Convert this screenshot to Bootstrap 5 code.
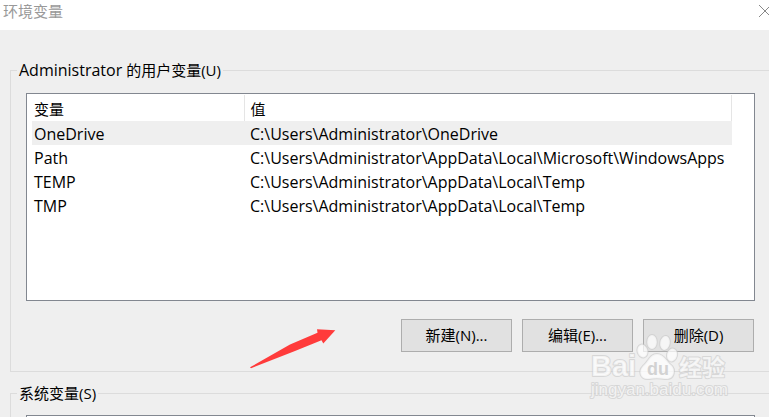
<!DOCTYPE html>
<html lang="zh-CN">
<head>
<meta charset="utf-8">
<meta name="viewport" content="width=device-width, initial-scale=1">
<title>环境变量</title>
<link href="https://cdn.jsdelivr.net/npm/bootstrap@5.3.0/dist/css/bootstrap.min.css" rel="stylesheet">
<style>
  body { font: 15px/24px "Open Sans", "Noto Sans CJK SC", sans-serif; color: #000; background: #efefef; }
  .title-bar { height: 30px; padding-left: 3px; }
  .title-bar h1 { font-size: 15px; line-height: 22px; color: #999; }
  .close-btn { width: 16px; height: 22px; color: #888; }
  .dialog-body { padding: 28px 0 0 10px; }
  .group-box { border: 1px solid #dcdcdc; border-right: 0; padding: 0 14px 19px 15px; margin-bottom: 9px; }
  .group-box legend { float: none; width: auto; margin: 0 0 0 -9px; padding: 0 2px; font-size: 15px; line-height: 24px; }
  .latin { font-size: 16px; }
  .var-list { border: 1px solid #828790; background: #fff; min-height: 208px; margin-top: 11px; padding: 1px 22px 0 5px; }
  .group-box + .group-box .var-list { margin-top: 10px; }
  .var-table { table-layout: fixed; line-height: 22px; font-size: 16px; }
  .var-table th, .var-table td { padding: 2px 0 0 6px; font-weight: 400; white-space: nowrap; }
  .var-table th { height: 26px; border-right: 1px solid #e5e5e5; font-size: 15px; }
  .var-table .name-col { width: 212px; }
  .var-table th:first-child, .var-table td:first-child { padding-left: 2px; }
  .var-table .selected { background: #efefef; }
  .actions { margin: 18px 1px 0 0; gap: 10px; }
  .dialog-btn { width: 111px; height: 33px; padding: 0 0 2px; border: 1px solid #adadad; border-radius: 0; background: #e1e1e1; color: #000; font-size: 15px; line-height: 24px; }
  .pointer-arrow { left: 250px; top: 327px; pointer-events: none; }
  .watermark { left: 584px; top: 328px; pointer-events: none; }
  .watermark text { font-family: "Liberation Sans", "Noto Sans CJK SC", sans-serif; font-weight: 700; }
  .watermark .site { font-weight: 400; }
</style>
<script src="https://cdn.jsdelivr.net/npm/bootstrap@5.3.0/dist/js/bootstrap.bundle.min.js"></script>
</head>
<body>
<div class="position-relative vh-100 overflow-hidden">
  <header class="title-bar bg-white d-flex justify-content-between">
    <h1 class="m-0 fw-normal">环境变量</h1>
    <button type="button" class="close-btn btn border-0 p-0 d-flex align-items-center overflow-hidden" aria-label="关闭">
      <svg class="flex-shrink-0 ms-1" width="14" height="14" viewBox="0 0 14 14" fill="none" stroke="currentColor"><path d="M2 1l12 12M14 1L2 13"/></svg>
    </button>
  </header>

  <main class="dialog-body">
    <fieldset class="group-box">
      <legend><span class="latin">Administrator</span> 的用户变量(U)</legend>
      <div class="var-list">
        <table class="var-table w-100">
          <thead>
            <tr><th class="name-col" scope="col">变量</th><th scope="col">值</th></tr>
          </thead>
          <tbody>
            <tr class="selected"><td>OneDrive</td><td>C:\Users\Administrator\OneDrive</td></tr>
            <tr><td>Path</td><td>C:\Users\Administrator\AppData\Local\Microsoft\WindowsApps</td></tr>
            <tr><td>TEMP</td><td>C:\Users\Administrator\AppData\Local\Temp</td></tr>
            <tr><td>TMP</td><td>C:\Users\Administrator\AppData\Local\Temp</td></tr>
          </tbody>
        </table>
      </div>
      <div class="actions d-flex justify-content-end">
        <button type="button" class="btn dialog-btn">新建(N)...</button>
        <button type="button" class="btn dialog-btn">编辑(E)...</button>
        <button type="button" class="btn dialog-btn">删除(D)</button>
      </div>
    </fieldset>

    <fieldset class="group-box">
      <legend>系统变量(S)</legend>
      <div class="var-list"></div>
    </fieldset>
  </main>

  <svg class="pointer-arrow position-absolute" width="88" height="44" viewBox="0 0 88 44" aria-hidden="true">
    <path d="M0 40.300L40 17.500L67.500 5.700L67 2.300L85.300 3.300L73.300 16.500L71.500 13.300L45 24L1 41.200Z" fill="#ff3b3b"/>
  </svg>

  <svg class="watermark position-absolute" width="150" height="76" viewBox="0 0 150 76" aria-hidden="true">
    <g fill="#fff" fill-opacity=".7" stroke="#c8c8c8" stroke-opacity=".6" stroke-width="2" paint-order="stroke" stroke-linejoin="round">
      <text x="7" y="48" font-size="29">Bai</text>
      <ellipse cx="58.500" cy="23" rx="5" ry="6.500" transform="rotate(-15 58.500 23)"/>
      <ellipse cx="68" cy="14" rx="4.800" ry="7"/>
      <ellipse cx="81" cy="15" rx="4.800" ry="7" transform="rotate(10 81 15)"/>
      <ellipse cx="88" cy="27" rx="5" ry="6.500" transform="rotate(15 88 27)"/>
      <path d="M73 26C80 26 82 33 87 37C92 41 91 52 81 51C75 50 70 50 65 51C56 52 54 43 59 38C64 34 66 26 73 26Z"/>
      <text x="95" y="48" font-size="23">经验</text>
      <text class="site" x="7" y="67" font-size="17">jingyan.baidu.com</text>
    </g>
    <text x="63" y="47" font-size="18" fill="#d2d2d2">du</text>
  </svg>
</div>
</body>
</html>
